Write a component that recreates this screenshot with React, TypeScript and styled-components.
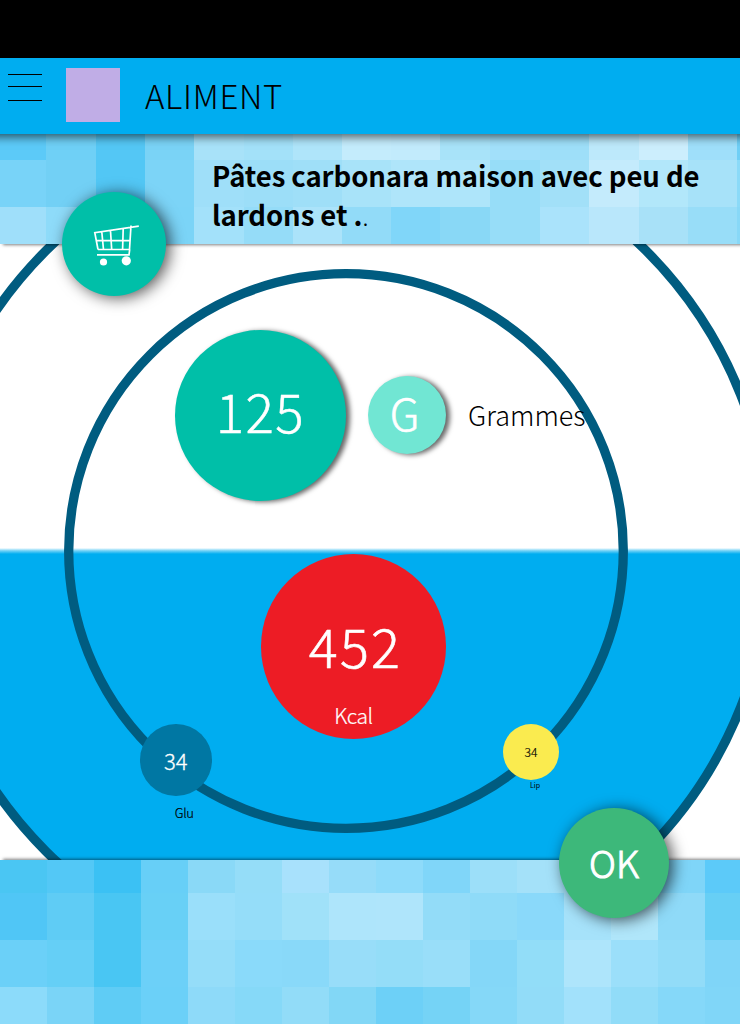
import React from "react";
import styled, { createGlobalStyle } from "styled-components";

const Global = createGlobalStyle`
  * { box-sizing: border-box; }
  html, body { margin: 0; padding: 0; background: #fff; }
  body, button { font-family: "Noto Sans CJK SC", "Noto Sans", sans-serif; }
  body { overflow: hidden; }
`;

const Screen = styled.main`
  width: 740px;
  height: 1024px;
  display: flex;
  flex-direction: column;
  position: relative;
  overflow: hidden;
  background: #fff;
`;

const StatusBar = styled.div`
  height: 58px;
  flex: none;
  background: #000;
`;

/* Bleeds past both screen edges so its shadow keeps full strength there. */
const Header = styled.header`
  height: 76px;
  flex: none;
  display: flex;
  align-items: flex-start;
  gap: 24px;
  margin: 0 -20px;
  padding: 10px 28px;
  background: #00adf0;
  box-shadow: 0 2px 9px 1px rgba(0, 0, 0, 0.6);
  clip-path: inset(0 0 -20px 0);
  z-index: 2;
`;

const MenuButton = styled.button`
  width: 34px;
  height: 34px;
  padding: 0;
  border: 0;
  background: none;
  svg { display: block; }
`;

const Avatar = styled.div`
  width: 54px;
  height: 54px;
  background: #c0ade6;
`;

const PageTitle = styled.h1`
  margin: 0;
  padding: 3px 0 0 1px;
  font-size: 33px;
  font-weight: 300;
  letter-spacing: 0.7px;
  line-height: 49px;
  color: #000;
  white-space: nowrap;
`;

const Banner = styled.section`
  height: 110px;
  flex: none;
  display: grid;
  z-index: 1;
  box-shadow: 3px 1px 3px rgba(0, 0, 0, 0.5);
`;

const Mosaic = styled.div<{ $cols: string; $rows: string }>`
  grid-area: 1 / 1;
  display: grid;
  overflow: hidden;
  grid-template-columns: ${(p) => p.$cols};
  grid-template-rows: ${(p) => p.$rows};
`;

const Tile = styled.i<{ $color: string }>`
  background: ${(p) => p.$color};
`;

const DishName = styled.h2`
  grid-area: 1 / 1;
  display: flex;
  flex-direction: column;
  margin: 0;
  padding: 22px 0 0 212px;
  font-size: 27.5px;
  letter-spacing: -0.08px;
  line-height: 39px;
  font-weight: 700;
  color: #000;
  white-space: nowrap;
  small { font-size: 24px; font-weight: 300; }
`;

const Dial = styled.section`
  height: 616px;
  flex: none;
  display: grid;
  position: relative;
  overflow: hidden;
`;

const Rings = styled.svg`
  grid-area: 1 / 1;
  display: block;
`;

const DialContent = styled.div`
  grid-area: 1 / 1;
  display: flex;
  flex-direction: column;
  padding-top: 86px;
  gap: 53px;
`;

const Portion = styled.div`
  display: flex;
  align-items: center;
  gap: 22px;
  padding-left: 175px;
`;

const Energy = styled.div`
  display: flex;
  padding-left: 261px;
`;

const Bubble = styled.div<{ $d: number; $color: string; $raised?: boolean; $lift?: number }>`
  width: ${(p) => p.$d}px;
  height: ${(p) => p.$d}px;
  flex: none;
  display: flex;
  flex-direction: column;
  align-items: center;
  justify-content: center;
  padding-bottom: ${(p) => p.$lift ?? 0}px;
  border-radius: 50%;
  background: ${(p) => p.$color};
  box-shadow: ${(p) => (p.$raised ? "4px 1px 5px rgba(0, 0, 0, 0.6)" : "none")};
`;

const UnitBubble = styled(Bubble)`
  margin-bottom: 1px;
  padding-right: 5px;
`;

const EnergyBubble = styled(Bubble)`
  justify-content: flex-end;
  gap: 25px;
  > :first-child { padding-left: 4px; }
`;

const Label = styled.span<{ $size: number; $color?: string; $weight?: number; $track?: number; $stroke?: number }>`
  font-size: ${(p) => p.$size}px;
  font-weight: ${(p) => p.$weight ?? 300};
  letter-spacing: ${(p) => p.$track ?? 0}px;
  line-height: 1.2;
  color: ${(p) => p.$color ?? "#fff"};
  -webkit-text-stroke: ${(p) => p.$stroke ?? 0}px currentColor;
  white-space: nowrap;
`;

/* A nutrient sits freely on the inner ring. */
const Nutrient = styled.div<{ $x: number; $gap: number; $shift: number }>`
  position: absolute;
  left: ${(p) => p.$x}px;
  top: 480px;
  display: flex;
  flex-direction: column;
  align-items: center;
  gap: ${(p) => p.$gap}px;
  > span { padding-left: ${(p) => p.$shift}px; }
`;

const Footer = styled.footer`
  height: 164px;
  flex: none;
  display: grid;
  z-index: 1;
  box-shadow: 3px -1px 3px rgba(0, 0, 0, 0.5);
`;

const RoundButton = styled.button<{ $x: number; $y: number; $d: number; $color: string; $lift?: number }>`
  position: absolute;
  z-index: 3;
  left: ${(p) => p.$x}px;
  top: ${(p) => p.$y}px;
  width: ${(p) => p.$d}px;
  height: ${(p) => p.$d}px;
  display: flex;
  align-items: center;
  justify-content: center;
  padding: 0 0 ${(p) => p.$lift ?? 0}px;
  border: 0;
  border-radius: 50%;
  background: ${(p) => p.$color};
  box-shadow: 4px 2px 15px rgba(0, 0, 0, 0.66);
`;

const topTiles = [
  "#5ccaf8 #6fd0f6 #54c7f5 #7ad3f6 #a8e2f9 #a3e1f9 #afe5fa #c4ecfc #c2ebfc #a8e3f9 #a2e0fa #9edff9 #bde9fb #cceefd #9fdffa #6fcff6",
  "#78d3f8 #72d0f5 #52c7f5 #7cd4f7 #9fdff9 #9cdef8 #9fdff8 #a8e3f9 #afe5fa #aee5fa #97ddf8 #a2e0f8 #c4ebfc #b2e7fa #a7e2f9 #8bdaf8",
  "#9fdffa #8edbf9 #7ed5f8 #7bd4f7 #a3e1fa #95dcf8 #abe3fa #92dbf8 #80d6f9 #89d8f6 #97ddf8 #aae3fb #b9e7fb #a8e1f8 #98ddf8 #88d8f7",
].map((r) => r.split(" "));

const bottomTiles = [
  "#4ac6f3 #53c8f6 #3bc1f4 #67cff7 #8ad9f7 #95ddf8 #a8e1fc #96dcf9 #8edbfa #80d6f9 #9cdff9 #a4e1f9 #a6e2fa #92dcf8 #7fd5f8 #5ccaf9",
  "#50c6f6 #5fccf5 #49c6f3 #68d0f6 #9adffa #95ddf9 #a0e1f9 #aee5fb #afe5fb #93dcf8 #8fdbf8 #8ad9fa #a6e2fa #b0e6fa #8fdaf8 #67cff5",
  "#6bd0f8 #65cff6 #49c6f3 #6cd0f8 #95ddf9 #8adafa #89d9f9 #98ddf9 #94ddf8 #99def9 #84d7f8 #92ddf8 #aee5fb #9bdffa #92dcf8 #7fd5f8",
  "#8cdbfa #7ad4f7 #5fccf5 #6bd0f8 #8edaf9 #86d9f8 #92dcf8 #82d7f6 #6dd0f7 #75d3f6 #85d8f8 #92dcf8 #a2e1fb #91dcf8 #85d8f9 #80d6f8",
].map((r) => r.split(" "));

const tiles = (rows: string[][]) =>
  rows.flatMap((row, r) => row.map((c, i) => <Tile key={`${r}-${i}`} $color={c} />));

const App: React.FC = () => (
  <>
    <Global />
    <Screen>
      <StatusBar />
      <Header>
        <MenuButton aria-label="Menu">
          <svg width="34" height="34" shapeRendering="crispEdges">
            <path d="M0 6.5H34M0 18.5H34M0 32.5H34" stroke="#000" />
          </svg>
        </MenuButton>
        <Avatar />
        <PageTitle>ALIMENT</PageTitle>
      </Header>

      <Banner>
        <Mosaic $cols="46px 50px 49px 49px 50px 49px 49px 49px 49px 50px 50px 49px 50px 49px 49px 3px" $rows="26px 47px 37px">
          {tiles(topTiles)}
        </Mosaic>
        <DishName>
          <span>Pâtes carbonara maison avec peu de</span>
          <span>lardons et .<small>.</small></span>
        </DishName>
      </Banner>

      <Dial>
        <Rings width="740" height="616" viewBox="0 244 740 616">
          <defs>
            <linearGradient id="edge" gradientUnits="userSpaceOnUse" x1="0" y1="548" x2="0" y2="554">
              <stop offset="0" stopColor="#00adf0" stopOpacity="0" />
              <stop offset="0.45" stopColor="#00adf0" stopOpacity="0.55" />
              <stop offset="1" stopColor="#00adf0" />
            </linearGradient>
            <clipPath id="disc"><circle cx="346" cy="551" r="425" /></clipPath>
          </defs>
          <rect x="0" y="548" width="740" height="312" fill="url(#edge)" clipPath="url(#disc)" />
          <g fill="none" stroke="#005c80" strokeWidth="9.3">
            <circle cx="346" cy="551" r="424.5" />
            <circle cx="346" cy="551" r="277.3" />
          </g>
        </Rings>

        <DialContent>
          <Portion>
            <Bubble $d={171} $color="#00bfa8" $raised $lift={9}>
              <Label $size={53} $track={1.4} $stroke={0.5}>125</Label>
            </Bubble>
            <UnitBubble $d={78} $color="#71e6d3" $raised $lift={5}>
              <Label $size={44} $stroke={0.6}>G</Label>
            </UnitBubble>
            <Label $size={27} $color="#000">Grammes</Label>
          </Portion>
          <Energy>
            <EnergyBubble $d={185} $color="#ed1c25" $lift={11}>
              <Label $size={54} $track={2.2} $stroke={0.6}>452</Label>
              <Label $size={21} $track={-0.5} $stroke={0.2}>Kcal</Label>
            </EnergyBubble>
          </Energy>
        </DialContent>

        <Nutrient $x={140} $gap={9} $shift={17}>
          <Bubble $d={71.5} $color="#0077a3">
            <Label $size={22} $stroke={0.3}>34</Label>
          </Bubble>
          <Label $size={13} $color="#000" $track={-0.3} $stroke={0.2}>Glu</Label>
        </Nutrient>
        <Nutrient $x={503} $gap={1} $shift={8}>
          <Bubble $d={56} $color="#faeb4f">
            <Label $size={12} $color="#000" $stroke={0.2}>34</Label>
          </Bubble>
          <Label $size={7} $color="#000" $weight={400}>Lip</Label>
        </Nutrient>
      </Dial>

      <Footer>
        <Mosaic $cols="repeat(15, 47px) 35px" $rows="33px 47px 47px 37px">
          {tiles(bottomTiles)}
        </Mosaic>
      </Footer>

      <RoundButton $x={62} $y={191.5} $d={104} $color="#00bfa8" aria-label="Panier">
        <svg width="104" height="104" viewBox="62 191.5 104 104" fill="none" stroke="#fff" strokeWidth="1.7">
          <path d="M98 249H129.500L131 225M138.800 225.700L94.800 232.200L98 249M95.800 240.200H130M101.800 231.500L103.500 249M110.500 230.200L111.700 249M123.200 228.200L122.600 249M129.700 249L129 254.300H97" />
          <circle cx="103.500" cy="261.500" r="3.600" fill="#fff" stroke="none" />
          <circle cx="126.300" cy="260.300" r="4.600" fill="#fff" stroke="none" />
        </svg>
      </RoundButton>

      <RoundButton $x={559} $y={808} $d={110} $color="#3db87a" $lift={2}>
        <Label $size={37} $stroke={1}>OK</Label>
      </RoundButton>
    </Screen>
  </>
);

export default App;
